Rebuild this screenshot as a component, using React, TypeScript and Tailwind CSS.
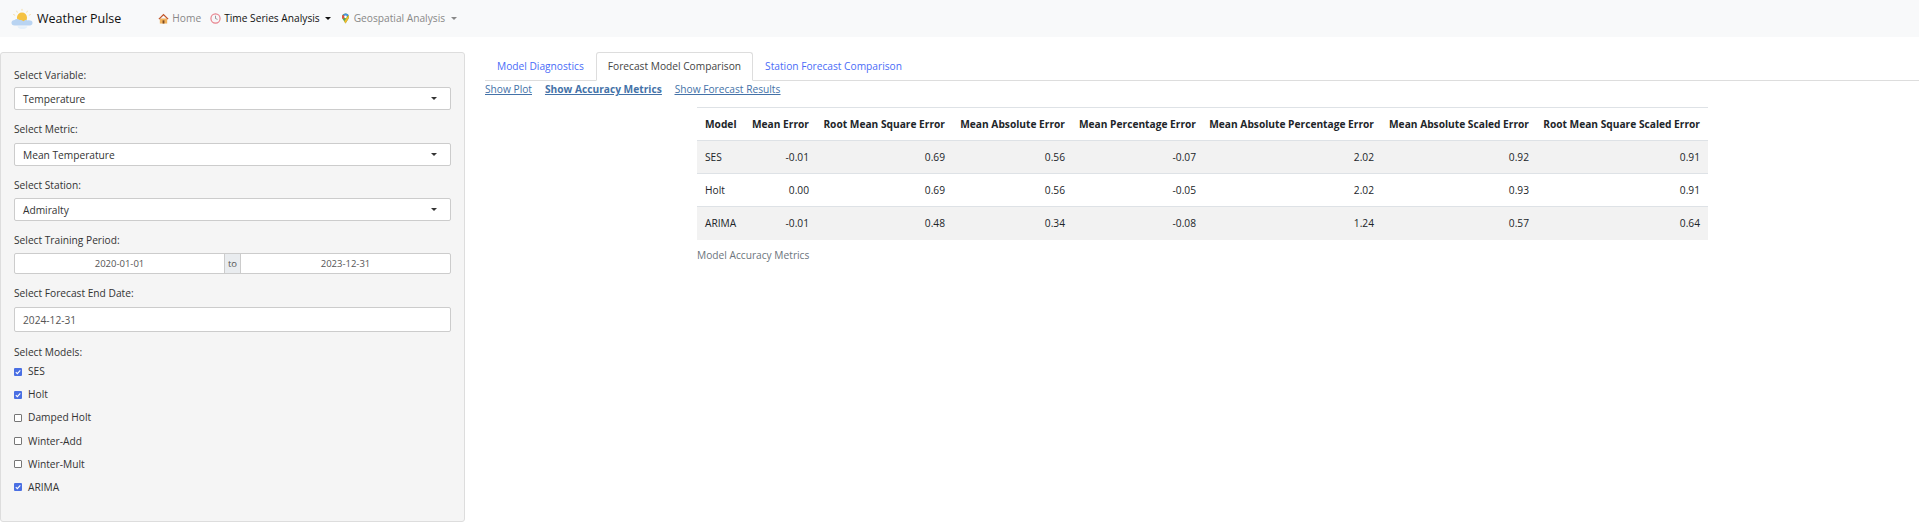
const rows = [
  ["SES", "-0.01", "0.69", "0.56", "-0.07", "2.02", "0.92", "0.91"],
  ["Holt", "0.00", "0.69", "0.56", "-0.05", "2.02", "0.93", "0.91"],
  ["ARIMA", "-0.01", "0.48", "0.34", "-0.08", "1.24", "0.57", "0.64"],
];

const models = [
  { name: "SES", checked: true },
  { name: "Holt", checked: true },
  { name: "Damped Holt", checked: false },
  { name: "Winter-Add", checked: false },
  { name: "Winter-Mult", checked: false },
  { name: "ARIMA", checked: true },
];

function Caret({ className }: { className: string }) {
  return <span className={`inline-block border-x-[3.5px] border-t-[3.5px] border-x-transparent ${className}`} />;
}

function Logo() {
  return (
    <svg viewBox="0 0 24 24" className="w-[22px] h-[22px]">
      <g stroke="#f3d58a" strokeWidth="0.8">
        <path d="M12 1v2M6 3l1 2M18 3l-1 2M2.500 7l2 1M21.500 7l-2 1" />
      </g>
      <circle cx="12" cy="10.500" r="5.500" fill="#f5c242" />
      <path d="M4 19c-2.500 0-3.500-1.500-3.500-3S2 13 4 13c1-1.500 4-1.500 5.500 0 2 0 3 .5 4 1.500 2-1.500 3-1.500 4.500-1 2-.5 5.500 0 5.500 2.500s-2 3-4 3z" fill="#b9d4f2" />
      <path d="M7 20h11c-1 2.500-3 3-5.500 3S8 22.500 7 20z" fill="#e4effa" />
    </svg>
  );
}

function HomeIcon() {
  return (
    <svg viewBox="0 0 12 12" className="w-[11px] h-[11px]">
      <path d="M2 6h8v5.500H2z" fill="#f2b35d" />
      <path d="M6 .8.500 6.200l1 .8L6 2.800 10.500 7l1-.8z" fill="#c1572c" />
      <path d="M5 8h2v3.500H5z" fill="#7a4a24" />
    </svg>
  );
}

function ClockIcon() {
  return (
    <svg viewBox="0 0 12 12" className="w-[11px] h-[11px]">
      <circle cx="6" cy="6" r="5" fill="#f7f7f9" stroke="#e8838d" strokeWidth="1.300" />
      <path d="M6 3v3l2.200 1" fill="none" stroke="#777" strokeWidth="0.800" />
    </svg>
  );
}

function PinIcon() {
  return (
    <svg viewBox="0 0 12 12" className="w-[11px] h-[11px]">
      <path d="M6 .5C3.700.500 2.200 2.200 2.200 4.200c0 1 .3 1.800.9 2.600L6 11.500l2.900-4.700c.6-.8.900-1.600.900-2.600C9.800 2.200 8.300.500 6 .5z" fill="#4caf50" />
      <path d="M3 1.800 6 .5c1.500 0 2.800.8 3.400 2L6 4.200z" fill="#4a90e2" />
      <path d="M2.200 4.200c0-1 .3-1.700.8-2.400l3 2.400-2.900 2.600c-.6-.8-.900-1.600-.900-2.600z" fill="#e2503f" />
      <path d="M9.400 2.500c.3.500.4 1.100.4 1.700 0 1-.3 1.800-.9 2.600L6 11.500 4.500 9z" fill="#f4b92f" />
      <circle cx="6" cy="4.200" r="1.400" fill="#fff" />
    </svg>
  );
}

function Field({ label, className, gap, children }: { label: string; className: string; gap: string; children: React.ReactNode }) {
  return (
    <div className={className}>
      <div className={`h-[15px] leading-[15px] ${gap}`}>{label}</div>
      {children}
    </div>
  );
}

function SelectBox({ value }: { value: string }) {
  return (
    <div className="h-[23px] px-[8px] flex items-center justify-between bg-white border border-[#cccccc] rounded-[2px] text-[#333333]">
      <span className="pt-[2px]">{value}</span>
      <Caret className="border-t-[#333333] mr-[5px] mb-[1px]" />
    </div>
  );
}

export default function App() {
  return (
    <div className="h-[530px] overflow-hidden bg-white text-[10.2px] leading-[15px] text-[#333333] font-['Open_Sans','Noto_Sans',sans-serif]">
      {/* Navbar */}
      <nav className="h-[37px] bg-[#f8f9fa] flex items-center pl-[11px]">
        <Logo />
        <span className="ml-[4px] text-[12.500px] text-[#111111]">Weather Pulse</span>
        <div className="ml-[37px] flex items-center text-[10.2px]">
          <a className="flex items-center gap-[3px] text-[#888888]">
            <HomeIcon />
            Home
          </a>
          <a className="ml-[9px] flex items-center gap-[3px] text-[#111111]">
            <ClockIcon />
            Time Series Analysis
            <Caret className="border-t-[#111111] ml-[2px]" />
          </a>
          <a className="ml-[9px] flex items-center gap-[3px] text-[#888888]">
            <PinIcon />
            Geospatial Analysis
            <Caret className="border-t-[#888888] ml-[3px]" />
          </a>
        </div>
      </nav>

      <div className="flex pt-[15px]">
        {/* Sidebar */}
        <aside className="w-[465px] h-[470px] shrink-0 bg-[#f5f5f5] border border-[#dddddd] rounded-[3px] px-[13px] pt-[15px]">
          <Field label="Select Variable:" className="" gap="mb-[4px]">
            <SelectBox value="Temperature" />
          </Field>
          <Field label="Select Metric:" className="mt-[12px]" gap="mb-[6px]">
            <SelectBox value="Mean Temperature" />
          </Field>
          <Field label="Select Station:" className="mt-[12px]" gap="mb-[5px]">
            <SelectBox value="Admiralty" />
          </Field>
          <Field label="Select Training Period:" className="mt-[12px]" gap="mb-[5px]">
            <div className="h-[21px] flex text-[9.500px] text-[#555555]">
              <div className="flex-1 flex items-center justify-center bg-white border border-[#cccccc] rounded-l-[2px]">2020-01-01</div>
              <div className="w-[17px] -mx-px z-10 flex items-center justify-center bg-[#e9ecef] border border-[#cccccc]">to</div>
              <div className="flex-1 flex items-center justify-center bg-white border border-[#cccccc] rounded-r-[2px]">2023-12-31</div>
            </div>
          </Field>
          <Field label="Select Forecast End Date:" className="mt-[12px]" gap="mb-[6px]">
            <div className="h-[25px] px-[8px] pt-[2px] flex items-center bg-white border border-[#cccccc] rounded-[2px] text-[#555555]">2024-12-31</div>
          </Field>
          <div className="mt-[13px]">
            <div className="h-[15px] leading-[15px] mb-[4px]">Select Models:</div>
            <div className="flex flex-col gap-[8.200px]">
              {models.map((m) => (
                <label key={m.name} className="flex items-center gap-[6px] h-[15px]">
                  <span className={`w-[8px] h-[8px] rounded-[1px] flex items-center justify-center ${m.checked ? "bg-[#4a6fe3]" : "bg-white border border-[#767676]"}`}>
                    {m.checked && (
                      <svg viewBox="0 0 8 8" className="w-[8px] h-[8px]">
                        <path d="M1.800 4.200 3.300 5.700 6.300 2.300" fill="none" stroke="#fff" strokeWidth="1.100" />
                      </svg>
                    )}
                  </span>
                  {m.name}
                </label>
              ))}
            </div>
          </div>
        </aside>

        {/* Main */}
        <main className="flex-1 min-w-0 pl-[20px]">
          <div className="h-[29px] flex border-b border-[#dddddd]">
            <a className="h-[29px] px-[12px] flex items-center text-[#4a6cf7]">Model Diagnostics</a>
            <a className="h-[29px] px-[11px] flex items-center bg-white border border-[#dddddd] border-b-white rounded-t-[3px] text-[#444444]">Forecast Model Comparison</a>
            <a className="h-[29px] px-[12px] flex items-center text-[#4a6cf7]">Station Forecast Comparison</a>
          </div>
          <div className="h-[17px] flex items-center gap-[13px] text-[#4472a8] underline">
            <a>Show Plot</a>
            <a className="font-bold">Show Accuracy Metrics</a>
            <a>Show Forecast Results</a>
          </div>

          <div className="pl-[212px] mt-[9px]">
            <table className="w-[1011px] table-fixed border-collapse border-t border-[#dee2e6] text-[#212529]">
              <thead>
                <tr className="h-[33px] border-b border-[#dee2e6]">
                  <th className="w-[48px] pl-[8px] text-left font-bold">Model</th>
                  <th className="w-[72px] pr-[8px] text-right font-bold">Mean Error</th>
                  <th className="w-[136px] pr-[8px] text-right font-bold">Root Mean Square Error</th>
                  <th className="w-[120px] pr-[8px] text-right font-bold">Mean Absolute Error</th>
                  <th className="w-[131px] pr-[8px] text-right font-bold">Mean Percentage Error</th>
                  <th className="w-[178px] pr-[8px] text-right font-bold">Mean Absolute Percentage Error</th>
                  <th className="w-[155px] pr-[8px] text-right font-bold">Mean Absolute Scaled Error</th>
                  <th className="w-[171px] pr-[8px] text-right font-bold">Root Mean Square Scaled Error</th>
                </tr>
              </thead>
              <tbody>
                {rows.map((row, i) => (
                  <tr key={row[0]} className={`h-[33px] ${i < 2 ? "border-b border-[#dee2e6]" : ""} ${i % 2 === 0 ? "bg-[#f2f2f2]" : "bg-white"}`}>
                    {row.map((cell, j) => (
                      <td key={j} className={j === 0 ? "pl-[8px] text-left" : "pr-[8px] text-right"}>
                        {cell}
                      </td>
                    ))}
                  </tr>
                ))}
              </tbody>
            </table>
            <div className="mt-[7px] h-[16px] leading-[16px] text-[#6c757d]">Model Accuracy Metrics</div>
          </div>
        </main>
      </div>
    </div>
  );
}
